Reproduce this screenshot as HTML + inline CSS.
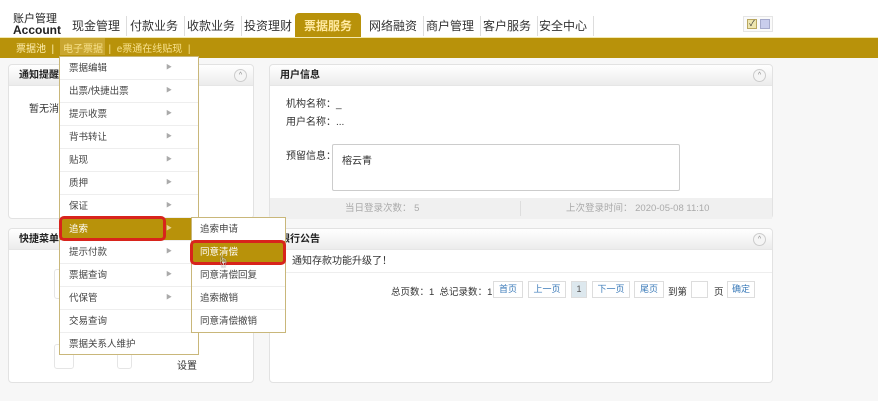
<!DOCTYPE html>
<html><head><meta charset="utf-8"><style>
*{margin:0;padding:0;box-sizing:border-box}
body{width:878px;height:401px;background:#f7f7f7;font-family:"Liberation Sans","Noto Sans CJK SC",sans-serif;font-size:10px;color:#333;position:relative;overflow:hidden}
.abs{position:absolute}
.top{left:0;top:0;width:878px;height:37px;background:#fff}
.logo{left:13px;top:14px;font-size:11px;line-height:11px;color:#222}
.logo b{font-size:12px}
.tab{top:16px;height:20px;font-size:12px;line-height:20px;color:#333;border-right:1px solid #ddd;padding:0 6px}
.act{left:295px;top:13px;width:66px;height:24px;background:#b8920a;border-radius:4px 4px 0 0;color:#ffe9a0;font-size:12px;line-height:26px;text-align:center;font-weight:bold}
.bar{left:0;top:37px;width:878px;height:21px;background:#b8920a;border-top:1px solid #f3e9b0}
.sub{top:40px;font-size:10px;color:#ffefb0}
.panel{background:#fff;border:1px solid #e2e2e2;border-radius:4px}
.ph{position:absolute;left:0;top:0;right:0;height:21px;background:linear-gradient(#fff,#ececec);border-bottom:1px solid #e6e6e6;font-weight:bold;font-size:10px;line-height:21px;padding-left:10px;color:#222;border-radius:4px 4px 0 0}
.col{position:absolute;right:6px;top:4px;width:13px;height:13px;border:1px solid #ccc;border-radius:50%;background:#f5f5f5;font-size:7px;line-height:11px;text-align:center;color:#888}
.menu{left:59px;top:56px;width:140px;height:299px;background:#fff;border:1px solid #c9b77a}
.mi{position:absolute;left:0;width:138px;height:23px;border-bottom:1px solid #eee;font-size:9.5px;line-height:23px;padding-left:9px;color:#444}
.mi i{position:absolute;right:26px;top:0;font-style:normal;font-size:6px;color:#aaa}
.smenu{left:191px;top:217px;width:95px;height:116px;background:#fff;border:1px solid #c9b77a}
.si{position:absolute;left:0;width:93px;height:23px;border-bottom:1px solid #eee;font-size:9.5px;line-height:23px;padding-left:8px;color:#444}
.btn{top:281px;height:17px;border:1px solid #ddd;background:#fff;font-size:9px;line-height:15px;text-align:center;color:#3a7ab8}
</style></head><body>
<div class="abs top"></div>
<div class="abs logo">账户管理<br><b>Account</b></div>
<div class="abs tab" style="left:66px">现金管理</div>
<div class="abs tab" style="left:124px">付款业务</div>
<div class="abs tab" style="left:181px">收款业务</div>
<div class="abs tab" style="left:238px">投资理财</div>
<div class="abs act">票据服务</div>
<div class="abs tab" style="left:363px">网络融资</div>
<div class="abs tab" style="left:420px">商户管理</div>
<div class="abs tab" style="left:477px">客户服务</div>
<div class="abs tab" style="left:533px">安全中心</div>
<div class="abs" style="left:743px;top:16px;width:30px;height:16px;border:1px solid #e5e5e5;background:#fafafa"></div>
<div class="abs" style="left:747px;top:19px;width:10px;height:10px;background:#eee6b0;border:1px solid #b9a760;font-size:8px;line-height:8px;text-align:center">✓</div>
<div class="abs" style="left:760px;top:19px;width:10px;height:10px;background:#c9cdec;border:1px solid #a6aacc"></div>
<div class="abs bar"></div>
<div class="abs sub" style="left:16px">票据池 &nbsp;|&nbsp;</div>
<div class="abs" style="left:60px;top:38px;width:45px;height:17px;background:#c9a630"></div>
<div class="abs sub" style="left:63px;color:#f7e08a">电子票据 &nbsp;|&nbsp; e票通在线贴现 &nbsp;|</div>

<div class="abs panel" style="left:8px;top:64px;width:246px;height:155px"><div class="ph">通知提醒</div><div class="col">^</div>
<div class="abs" style="left:20px;top:35px;font-size:10px">暂无消息</div></div>
<div class="abs panel" style="left:8px;top:228px;width:246px;height:155px"><div class="ph">快捷菜单</div><div class="col">^</div>
<div class="abs" style="left:168px;top:128px;font-size:10px">设置</div>
<div class="abs" style="left:45px;top:40px;width:20px;height:30px;border:1px solid #e5e5e5;border-radius:3px"></div>
<div class="abs" style="left:45px;top:115px;width:20px;height:25px;border:1px solid #e5e5e5;border-radius:3px"></div>
<div class="abs" style="left:108px;top:120px;width:15px;height:20px;border:1px solid #e5e5e5;border-radius:3px"></div></div>

<div class="abs panel" style="left:269px;top:64px;width:504px;height:155px"><div class="ph">用户信息</div><div class="col">^</div>
<div class="abs" style="left:16px;top:30px">机构名称：_</div>
<div class="abs" style="left:16px;top:48px">用户名称：...</div>
<div class="abs" style="left:16px;top:82px">预留信息：</div>
<div class="abs" style="left:62px;top:79px;width:348px;height:47px;border:1px solid #ccc;border-radius:2px;padding:7px 9px">榕云青</div>
<div class="abs" style="left:0;top:133px;width:502px;height:21px;background:#f0f0f0;color:#aaa;font-size:9.5px;line-height:21px">
<span class="abs" style="left:75px">当日登录次数： 5</span><span class="abs" style="left:250px;top:3px;height:15px;border-left:1px solid #ddd"></span><span class="abs" style="left:296px">上次登录时间： 2020-05-08 11:10</span></div></div>

<div class="abs panel" style="left:269px;top:228px;width:504px;height:155px"><div class="ph">银行公告</div><div class="col">^</div>
<div class="abs" style="left:0;top:22px;width:502px;height:22px;border-bottom:1px solid #eee;padding-left:22px;line-height:22px">通知存款功能升级了！</div></div>
<div class="abs" style="left:391px;top:284px;font-size:9.5px">总页数：1 &nbsp;总记录数：1</div>
<div class="abs btn" style="left:493px;width:30px">首页</div>
<div class="abs btn" style="left:528px;width:38px">上一页</div>
<div class="abs btn" style="left:571px;width:16px;background:#dde8ee;color:#555">1</div>
<div class="abs btn" style="left:592px;width:38px">下一页</div>
<div class="abs btn" style="left:634px;width:30px">尾页</div>
<div class="abs" style="left:668px;top:284px;font-size:9.5px">到第</div>
<div class="abs btn" style="left:691px;width:17px"></div>
<div class="abs" style="left:714px;top:284px;font-size:9.5px">页</div>
<div class="abs btn" style="left:727px;width:28px">确定</div>

<div class="abs menu">
<div class="mi" style="top:0">票据编辑<i>▶</i></div>
<div class="mi" style="top:23px">出票/快捷出票<i>▶</i></div>
<div class="mi" style="top:46px">提示收票<i>▶</i></div>
<div class="mi" style="top:69px">背书转让<i>▶</i></div>
<div class="mi" style="top:92px">贴现<i>▶</i></div>
<div class="mi" style="top:115px">质押<i>▶</i></div>
<div class="mi" style="top:138px">保证<i>▶</i></div>
<div class="mi" style="top:161px;background:#b8920a;color:#fff">追索<i style="color:#e8d590">▶</i></div>
<div class="mi" style="top:184px">提示付款<i>▶</i></div>
<div class="mi" style="top:207px">票据查询<i>▶</i></div>
<div class="mi" style="top:230px">代保管<i>▶</i></div>
<div class="mi" style="top:253px">交易查询</div>
<div class="mi" style="top:276px;border:0">票据关系人维护</div>
</div>
<div class="abs" style="left:59px;top:216px;width:107px;height:25px;border:3px solid #d8241c;border-radius:5px"></div>
<div class="abs smenu">
<div class="si" style="top:0">追索申请</div>
<div class="si" style="top:23px;background:#b8920a;color:#fff">同意清偿</div>
<div class="si" style="top:46px">同意清偿回复</div>
<div class="si" style="top:69px">追索撤销</div>
<div class="si" style="top:92px;border:0">同意清偿撤销</div>
</div>
<div class="abs" style="left:190px;top:240px;width:96px;height:25px;border:3px solid #d8241c;border-radius:5px"></div>
<div class="abs" style="left:217px;top:253px;font-size:12px;color:#fff;text-shadow:0 0 1px #000">☝</div>
</body></html>
